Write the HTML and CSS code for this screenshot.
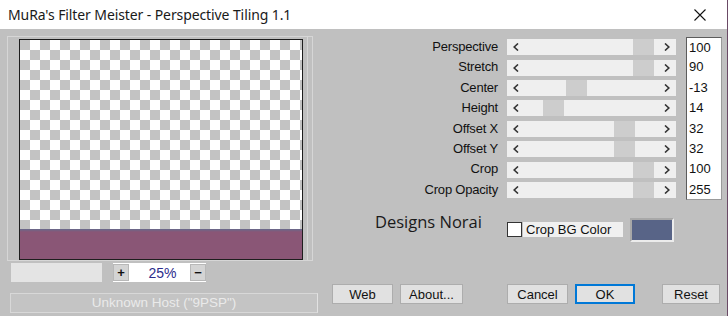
FILE: index.html
```html
<!DOCTYPE html>
<html lang="en">
<head>
    <meta charset="UTF-8">
    <title>MuRa's Filter Meister - Perspective Tiling 1.1</title>
    <link rel="stylesheet" href="styles.css">
</head>
<body>
    <div class="window">
        <!-- Title bar -->
        <header class="titlebar">
            <span class="title">MuRa's Filter Meister - Perspective Tiling 1.1</span>
            <svg class="close" width="12" height="12" viewBox="0 0 12 12">
                <path d="M0.5 0.5 L11.5 11.5 M11.5 0.5 L0.5 11.5" stroke="#111" stroke-width="1.1" fill="none"/>
            </svg>
        </header>

        <main class="dialog">
            <!-- Left: preview -->
            <section class="left">
                <div class="preview-frame">
                    <div class="canvas">
                        <div class="checker"></div>
                        <div class="tile"></div>
                    </div>
                </div>
                <div class="zoom-row">
                    <div class="zoom-blank"></div>
                    <div class="zoom-ctl">
                        <span class="zoom-btn">+</span>
                        <span class="zoom-val">25%</span>
                        <span class="zoom-btn">&minus;</span>
                    </div>
                </div>
                <div class="status">Unknown Host ("9PSP")</div>
            </section>

            <!-- Right: controls -->
            <section class="right">
                <div class="sliders">
                    <div class="row"><span class="label">Perspective</span><div class="track"><svg class="arrow" viewBox="0 0 6 8"><path d="M5 0.5 L1.2 4 L5 7.5"/></svg><span class="thumb" style="left:126px"></span><svg class="arrow" viewBox="0 0 6 8"><path d="M1 0.5 L4.8 4 L1 7.5"/></svg></div><span class="val">100</span></div>
                    <div class="row"><span class="label">Stretch</span><div class="track"><svg class="arrow" viewBox="0 0 6 8"><path d="M5 0.5 L1.2 4 L5 7.5"/></svg><span class="thumb" style="left:126px"></span><svg class="arrow" viewBox="0 0 6 8"><path d="M1 0.5 L4.8 4 L1 7.5"/></svg></div><span class="val">90</span></div>
                    <div class="row"><span class="label">Center</span><div class="track"><svg class="arrow" viewBox="0 0 6 8"><path d="M5 0.5 L1.2 4 L5 7.5"/></svg><span class="thumb" style="left:59px"></span><svg class="arrow" viewBox="0 0 6 8"><path d="M1 0.5 L4.8 4 L1 7.5"/></svg></div><span class="val">-13</span></div>
                    <div class="row"><span class="label">Height</span><div class="track"><svg class="arrow" viewBox="0 0 6 8"><path d="M5 0.5 L1.2 4 L5 7.5"/></svg><span class="thumb" style="left:36px"></span><svg class="arrow" viewBox="0 0 6 8"><path d="M1 0.5 L4.8 4 L1 7.5"/></svg></div><span class="val">14</span></div>
                    <div class="row"><span class="label">Offset X</span><div class="track"><svg class="arrow" viewBox="0 0 6 8"><path d="M5 0.5 L1.2 4 L5 7.5"/></svg><span class="thumb" style="left:107px"></span><svg class="arrow" viewBox="0 0 6 8"><path d="M1 0.5 L4.8 4 L1 7.5"/></svg></div><span class="val">32</span></div>
                    <div class="row"><span class="label">Offset Y</span><div class="track"><svg class="arrow" viewBox="0 0 6 8"><path d="M5 0.5 L1.2 4 L5 7.5"/></svg><span class="thumb" style="left:107px"></span><svg class="arrow" viewBox="0 0 6 8"><path d="M1 0.5 L4.8 4 L1 7.5"/></svg></div><span class="val">32</span></div>
                    <div class="row"><span class="label">Crop</span><div class="track"><svg class="arrow" viewBox="0 0 6 8"><path d="M5 0.5 L1.2 4 L5 7.5"/></svg><span class="thumb" style="left:126px"></span><svg class="arrow" viewBox="0 0 6 8"><path d="M1 0.5 L4.8 4 L1 7.5"/></svg></div><span class="val">100</span></div>
                    <div class="row"><span class="label">Crop Opacity</span><div class="track"><svg class="arrow" viewBox="0 0 6 8"><path d="M5 0.5 L1.2 4 L5 7.5"/></svg><span class="thumb" style="left:126px"></span><svg class="arrow" viewBox="0 0 6 8"><path d="M1 0.5 L4.8 4 L1 7.5"/></svg></div><span class="val">255</span></div>
                </div>

                <div class="extras">
                    <span class="brand">Designs Norai</span>
                    <label class="check"><span class="box"></span><span class="check-text">Crop BG Color</span></label>
                    <span class="swatch"></span>
                </div>

                <div class="buttons">
                    <button class="btn web">Web</button>
                    <button class="btn about">About...</button>
                    <button class="btn cancel">Cancel</button>
                    <button class="btn ok">OK</button>
                    <button class="btn reset">Reset</button>
                </div>
            </section>
        </main>
    </div>
</body>
</html>
```

FILE: styles.css
```css
body {
    margin: 0;
    padding: 0;
    font-family: 'Liberation Sans', Arial, sans-serif;
    color: #111;
}

.window {
    width: 728px;
    height: 316px;
    box-sizing: border-box;
    border-right: 1px solid #6b4a66;
    overflow: hidden;
}

/* Title bar */
.titlebar {
    height: 29px;
    background: #fff;
    display: flex;
    align-items: center;
    justify-content: space-between;
    padding: 0 21px 0 8px;
}

.title {
    font-family: 'Noto Sans', sans-serif;
    font-size: 14px;
    color: #1a1a1a;
    letter-spacing: -0.1px;
}

/* Dialog body */
.dialog {
    height: 287px;
    background: #c0c0c0;
    display: flex;
}

.left {
    width: 313px;
    padding: 7px 0 0 7px;
}

.preview-frame {
    width: 306px;
    height: 225px;
    box-sizing: border-box;
    border: 1px solid #d6d6d6;
    box-shadow: inset -4px 0 0 #c0c0c0, inset -5px 0 0 #d6d6d6;
    padding: 2px 0 0 11px;
}

.canvas {
    width: 284px;
    height: 221px;
    box-sizing: border-box;
    border: 1px solid #1e1e1e;
    border-bottom-width: 0;
    display: flex;
    flex-direction: column;
}

.checker {
    height: 189px;
    background-color: #fff;
    background-image: conic-gradient(#fff 25%, #c3c3c3 0 50%, #fff 0 75%, #c3c3c3 0);
    background-size: 20px 20px;
}

.tile {
    flex: 1;
    background: linear-gradient(#666a8c, #8a5676 3px);
    border-bottom: 1px solid #1e1e1e;
}

/* Zoom controls */
.zoom-row {
    display: flex;
    margin-top: 2px;
    height: 19px;
}

.zoom-blank {
    margin-left: 4px;
    width: 91px;
    background: #e4e4e4;
}

.zoom-ctl {
    margin-left: 11px;
    width: 93px;
    background: #fff;
    display: flex;
    align-items: center;
    justify-content: space-between;
}

.zoom-btn {
    width: 16px;
    height: 17px;
    box-sizing: border-box;
    background: #d4d4d4;
    border: 1px solid #b8b8b8;
    font-size: 13px;
    font-weight: bold;
    line-height: 15px;
    text-align: center;
    color: #111;
}

.zoom-val {
    font-size: 14px;
    color: #2c2c8c;
    margin-left: 6px;
}

.status {
    margin: 11px 0 0 3px;
    width: 308px;
    height: 20px;
    box-sizing: border-box;
    border: 1px solid #d8d8d8;
    border-right-color: #e2e2e2;
    background: #c4c4c4;
    color: #eaeaea;
    font-size: 13.5px;
    line-height: 18px;
    text-align: center;
}

/* Sliders */
.right {
    flex: 1;
    padding-top: 8px;
}

.sliders {
    display: grid;
    grid-template-columns: 187px 169px 36px;
    grid-auto-rows: 20.4px;
}

.row {
    display: contents;
}

.label {
    font-size: 13px;
    text-align: right;
    padding-right: 9px;
    line-height: 20px;
    color: #111;
    letter-spacing: -0.2px;
}

.track {
    position: relative;
    height: 16px;
    align-self: center;
    background: #efefef;
    display: flex;
    align-items: center;
    justify-content: space-between;
    padding: 0 6px 0 6px;
}

.thumb {
    position: absolute;
    top: 0;
    width: 21px;
    height: 16px;
    background: #cdcdcd;
}

.arrow {
    width: 6px;
    height: 8px;
    fill: none;
    stroke: #333;
    stroke-width: 1.6;
}

.val {
    margin-left: 10px;
    width: 36px;
    box-sizing: border-box;
    background: #fff;
    border-left: 1px solid #5c5c5c;
    border-right: 1px solid #9a9a9a;
    font-size: 13px;
    line-height: 20px;
    padding-left: 2px;
}

.row:first-child .val {
    border-top: 1px solid #5c5c5c;
    line-height: 19px;
}

.row:last-child .val {
    border-bottom: 1px solid #9a9a9a;
    line-height: 19px;
}

/* Extras */
.extras {
    display: flex;
    align-items: flex-start;
    margin-top: 18px;
    height: 24px;
}

.brand {
    margin: -8px 0 0 55px;
    font-family: 'Open Sans', sans-serif;
    font-size: 16.5px;
    color: #1a1a1a;
    width: 132px;
}

.check {
    display: flex;
    margin-top: 4px;
}

.box {
    width: 15px;
    height: 15px;
    box-sizing: border-box;
    background: #fff;
    border: 1px solid #333;
}

.check-text {
    width: 100px;
    margin-left: 1px;
    height: 15px;
    background: #f0f0f0;
    font-size: 13px;
    line-height: 15px;
    padding-left: 3px;
    box-sizing: border-box;
}

.swatch {
    margin-left: 7px;
    width: 44px;
    height: 24px;
    box-sizing: border-box;
    background: #586487;
    border: 2px solid;
    border-color: #a8a8a8 #ececec #ececec #a8a8a8;
}

/* Buttons */
.buttons {
    display: flex;
    margin-top: 42px;
}

.btn {
    height: 20px;
    box-sizing: border-box;
    background: #e1e1e1;
    border: 1px solid #adadad;
    font-family: 'Liberation Sans', Arial, sans-serif;
    font-size: 13px;
    color: #111;
    padding: 0;
}

.web { margin-left: 12px; width: 61px; }
.about { margin-left: 7px; width: 63px; }
.cancel { margin-left: 44px; width: 61px; }
.ok { margin-left: 7px; width: 60px; border: 2px solid #0078d7; }
.reset { margin-left: 27px; width: 58px; }
```
